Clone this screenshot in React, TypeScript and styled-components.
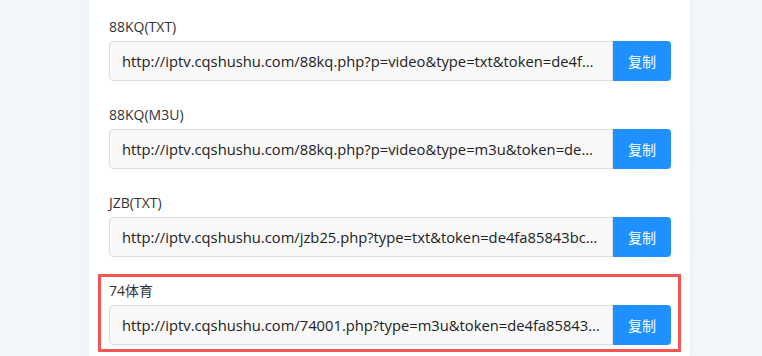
import React from "react";
import styled, { createGlobalStyle } from "styled-components";

const GlobalStyle = createGlobalStyle`
  html, body {
    margin: 0;
    padding: 0;
    background: #f3f6f9;
    height: 100%;
    overflow: hidden;
  }
  body {
    font-family: "Open Sans", "Noto Sans CJK SC", sans-serif;
  }
`;

const Page = styled.div`
  display: flex;
  height: 356px;
  padding-left: 89px;
`;

const Card = styled.div`
  width: 601px;
  background: #ffffff;
  box-shadow: 0 0 4px rgba(0, 0, 0, 0.06);
  padding: 13px 12px 0;
  box-sizing: border-box;
  display: flex;
  flex-direction: column;
  gap: 16px;
`;

const Item = styled.div<{ $highlight?: boolean }>`
  padding: 4px 7px 4px 8px;
  display: flex;
  flex-direction: column;
  gap: 4px;
  outline: ${(p) => (p.$highlight ? "3px solid #f45656" : "none")};
`;

const Label = styled.div`
  font-size: 14px;
  line-height: 20px;
  color: #333333;
`;

const Group = styled.div`
  display: flex;
  height: 40px;
`;

const UrlBox = styled.div`
  flex: 1;
  min-width: 0;
  box-sizing: border-box;
  border: 1px solid #dddddd;
  border-radius: 4px 0 0 4px;
  background: #f8f8f8;
  padding: 0 12px;
  font-size: 14.75px;
  line-height: 38px;
  color: #222222;
  white-space: nowrap;
  overflow: hidden;
  text-overflow: ellipsis;
`;

const CopyButton = styled.button`
  width: 58px;
  border: none;
  border-radius: 0 4px 4px 0;
  background: #1e90ff;
  color: #ffffff;
  font-family: "Noto Sans CJK SC", sans-serif;
  font-size: 14px;
  padding: 0;
  cursor: pointer;
`;

const items = [
  {
    label: "88KQ(TXT)",
    url: "http://iptv.cqshushu.com/88kq.php?p=video&type=txt&token=de4fa85843bc7e1d9a2b6c0f",
  },
  {
    label: "88KQ(M3U)",
    url: "http://iptv.cqshushu.com/88kq.php?p=video&type=m3u&token=de4fa85843bc7e1d9a2b6c0f",
  },
  {
    label: "JZB(TXT)",
    url: "http://iptv.cqshushu.com/jzb25.php?type=txt&token=de4fa85843bc7e1d9a2b6c0f",
  },
  {
    label: "74体育",
    url: "http://iptv.cqshushu.com/74001.php?type=m3u&token=de4fa85843bc7e1d9a2b6c0f",
    highlight: true,
  },
];

export default function App() {
  return (
    <>
      <GlobalStyle />
      <Page>
        <Card>
          {items.map((it) => (
            <Item key={it.label} $highlight={it.highlight}>
              <Label>{it.label}</Label>
              <Group>
                <UrlBox>{it.url}</UrlBox>
                <CopyButton>复制</CopyButton>
              </Group>
            </Item>
          ))}
        </Card>
      </Page>
    </>
  );
}
